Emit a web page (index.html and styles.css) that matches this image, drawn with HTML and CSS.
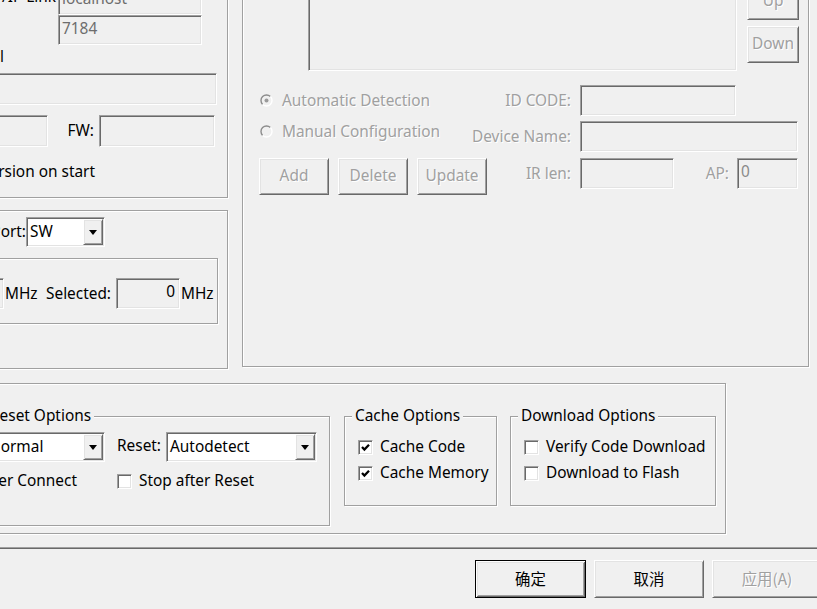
FILE: index.html
```html
<!DOCTYPE html>
<html>
<head>
<meta charset="utf-8">
<link rel="stylesheet" href="styles.css">
</head>
<body>
<div class="dialog">
  <div class="page">
    <div class="top">
      <div class="leftcol">
        <div class="group g1">
          <div class="row r-link">
            <div class="lbl l-link"><span>TCP/IP Link</span></div>
            <div class="edit e-host">localhost</div>
          </div>
          <div class="edit e-port">7184</div>
          <div class="lbl l-serial"><span>Serial</span></div>
          <div class="edit e-wide"></div>
          <div class="row r-fw">
            <div class="edit e-hw"></div>
            <div class="lbl l-fw"><span>FW:</span></div>
            <div class="edit e-fw"></div>
          </div>
          <div class="lbl l-ver"><span class="chkitem"><span class="chk"></span><span class="chk-text">Check version on start</span></span></div>
        </div>
        <div class="group g2">
          <div class="row r-port">
            <div class="lbl l-port"><span>Port:</span></div>
            <div class="combo c-port"><div class="combo-text">SW</div><div class="drop"><div class="tri"></div></div></div>
          </div>
          <div class="group g-clock">
            <div class="row r-clk">
              <div class="edit e-clk"></div>
              <div class="l-mhz1">MHz</div>
              <div class="lbl l-sel"><span>Selected:</span></div>
              <div class="edit e-sel">0</div>
              <div class="l-mhz2">MHz</div>
            </div>
          </div>
        </div>
      </div>
      <div class="group gright">
        <div class="row r-list">
          <div class="listbox"></div>
          <div class="updown">
            <div class="btn dis b-ud">Up</div>
            <div class="btn dis b-ud b-down">Down</div>
          </div>
        </div>
        <div class="row r-mid">
          <div class="radios">
            <div class="radio-item dis">
              <svg class="rb" width="13" height="13" viewBox="0 0 13 13"><circle cx="6.5" cy="6.5" r="5" fill="#f0f0f0"/><path d="M2.6 10.4A5.5 5.5 0 0 1 10.4 2.6" fill="none" stroke="#8c8c8c" stroke-width="1.4"/><path d="M10.4 2.6A5.5 5.5 0 0 1 2.6 10.4" fill="none" stroke="#ffffff" stroke-width="1.4"/><circle cx="6.5" cy="6.5" r="2" fill="#9a9a9a"/></svg>
              <span>Automatic Detection</span>
            </div>
            <div class="radio-item dis">
              <svg class="rb" width="13" height="13" viewBox="0 0 13 13"><circle cx="6.5" cy="6.5" r="5" fill="#f0f0f0"/><path d="M2.6 10.4A5.5 5.5 0 0 1 10.4 2.6" fill="none" stroke="#8c8c8c" stroke-width="1.4"/><path d="M10.4 2.6A5.5 5.5 0 0 1 2.6 10.4" fill="none" stroke="#ffffff" stroke-width="1.4"/></svg>
              <span>Manual Configuration</span>
            </div>
          </div>
          <div class="fields">
            <div class="row frow">
              <div class="lbl dis l-id"><span>ID CODE:</span></div>
              <div class="edit e-id"></div>
            </div>
            <div class="row frow f2">
              <div class="lbl dis l-id"><span>Device Name:</span></div>
              <div class="edit e-dev"></div>
            </div>
          </div>
        </div>
        <div class="row r-btns">
          <div class="btn dis b-act b-first">Add</div>
          <div class="btn dis b-act">Delete</div>
          <div class="btn dis b-act">Update</div>
          <div class="lbl dis l-ir"><span>IR len:</span></div>
          <div class="edit e-ir"></div>
          <div class="lbl dis l-ap"><span>AP:</span></div>
          <div class="edit e-ap">0</div>
        </div>
      </div>
    </div>
    <div class="group gbottom">
      <div class="row subs">
        <div class="group g-reset">
          <div class="title">Reset Options</div>
          <div class="row rs-row1">
            <div class="combo c-connect"><div class="combo-text">Normal</div><div class="drop"><div class="tri"></div></div></div>
            <div class="lbl l-reset"><span>Reset:</span></div>
            <div class="combo c-reset"><div class="combo-text">Autodetect</div><div class="drop"><div class="tri"></div></div></div>
          </div>
          <div class="row rs-row2">
            <div class="lbl l-stopc"><span class="chkitem"><span class="chk"></span><span class="chk-text">Stop after Connect</span></span></div>
            <div class="chkitem ci-reset"><span class="chk"></span><span class="chk-text">Stop after Reset</span></div>
          </div>
        </div>
        <div class="group g-cache">
          <div class="title">Cache Options</div>
          <div class="chkitem ck-row ck-first"><span class="chk"><svg class="tick" width="13" height="13" viewBox="0 0 13 13"><path d="M3 6 L5.4 8.5 L10 3.8" fill="none" stroke="#000" stroke-width="2.3"/></svg></span><span class="chk-text">Cache Code</span></div>
          <div class="chkitem ck-row ck-second"><span class="chk"><svg class="tick" width="13" height="13" viewBox="0 0 13 13"><path d="M3 6 L5.4 8.5 L10 3.8" fill="none" stroke="#000" stroke-width="2.3"/></svg></span><span class="chk-text">Cache Memory</span></div>
        </div>
        <div class="group g-down">
          <div class="title">Download Options</div>
          <div class="chkitem ck-row ck-first ck-clip"><span class="chk"></span><span class="chk-text">Verify Code Download</span></div>
          <div class="chkitem ck-row ck-second"><span class="chk"></span><span class="chk-text">Download to Flash</span></div>
        </div>
      </div>
    </div>
  </div>
  <div class="tabline"></div>
  <div class="buttons">
    <div class="btn btn-default bb bb-ok">确定</div>
    <div class="btn bb">取消</div>
    <div class="btn bb dis">应用(A)</div>
  </div>
</div>
</body>
</html>
```
FILE: styles.css
```css
* { box-sizing: border-box; }
html, body { margin: 0; padding: 0; background: #f0f0f0; }
body {
  font-family: "Noto Sans", "Liberation Sans", sans-serif;
  font-size: 15.4px;
  line-height: 18px;
  color: #000;
}
.dialog { width: 817px; height: 609px; overflow: hidden; background: #f0f0f0; }
.page { margin-left: -40px; }
.row { display: flex; align-items: flex-start; }

/* generic controls */
.group {
  border: 1px solid #a0a0a0;
  box-shadow: inset 1px 1px 0 #fff, 1px 1px 0 #fff;
}
.title {
  width: max-content;
  margin: -10px 0 0 7px;
  padding: 0 3px;
  background: #f0f0f0;
  line-height: 18px;
  white-space: nowrap;
}
.edit {
  flex: none;
  border: 1px solid;
  border-color: #a0a0a0 #fff #fff #a0a0a0;
  box-shadow: inset 1px 1px 0 #696969, inset -1px -1px 0 #e3e3e3;
  background: #f0f0f0;
  padding: 4px 3px 0;
  white-space: nowrap;
  overflow: hidden;
  color: #6d6d6d;
}
.combo {
  flex: none;
  display: flex;
  height: 30px;
  border: 1px solid;
  border-color: #a0a0a0 #fff #fff #a0a0a0;
  box-shadow: inset 1px 1px 0 #696969, inset -1px -1px 0 #e3e3e3;
  background: #fff;
  padding: 1px;
}
.combo-text { flex: 1; line-height: 26px; padding-left: 2px; white-space: nowrap; overflow: hidden; }
.drop {
  width: 20px;
  border: 1px solid;
  border-color: #fff #696969 #696969 #fff;
  box-shadow: inset 1px 1px 0 #e3e3e3, inset -1px -1px 0 #a0a0a0;
  background: #f0f0f0;
  display: flex;
  align-items: center;
  justify-content: center;
}
.tri { width: 0; height: 0; border-left: 4px solid transparent; border-right: 4px solid transparent; border-top: 5px solid #000; }
.btn {
  flex: none;
  border: 1px solid;
  border-color: #fff #696969 #696969 #fff;
  box-shadow: inset 1px 1px 0 #e3e3e3, inset -1px -1px 0 #a0a0a0;
  background: #f0f0f0;
  display: flex;
  align-items: center;
  justify-content: center;
  white-space: nowrap;
  padding-bottom: 2px;
}
.btn-default {
  border-color: #000;
  box-shadow: inset 1px 1px 0 #fff, inset -1px -1px 0 #696969, inset 2px 2px 0 #e3e3e3, inset -2px -2px 0 #a0a0a0;
}
.dis { color: #a0a0a0; text-shadow: 1px 1px 0 #fff; }
.lbl { flex: none; display: flex; justify-content: flex-end; white-space: nowrap; }
.chk {
  flex: none;
  display: block;
  width: 15px;
  height: 15px;
  border: 1px solid;
  border-color: #a0a0a0 #fff #fff #a0a0a0;
  box-shadow: inset 1px 1px 0 #696969, inset -1px -1px 0 #e3e3e3;
  background: #fff;
  margin-top: 2px;
}
.tick { display: block; }
.chkitem { display: flex; align-items: flex-start; white-space: nowrap; line-height: 18px; }
.chk-text { margin-left: 7px; }

/* layout */
.top { display: flex; align-items: flex-start; margin-top: -60px; height: 429px; }
.leftcol { width: 268px; flex: none; }

.g1 { height: 258px; }
.r-link { margin-top: 44px; height: 30px; }
.l-link { width: 95px; line-height: 24px; }
.e-host { margin-left: 2px; width: 144px; height: 30px; }
.e-port { margin-left: 97px; width: 144px; height: 30px; }
.l-serial { width: 43px; margin-top: 3px; }
.e-wide { margin-top: 7px; width: 256px; height: 32px; }
.r-fw { margin-top: 10px; height: 32px; }
.e-hw { width: 87px; height: 32px; }
.l-fw { width: 46px; line-height: 32px; }
.e-fw { margin-left: 5px; width: 116px; height: 32px; }
.l-ver { width: 134px; margin-top: 16px; }

.g2 { margin-top: 12px; height: 159px; }
.r-port { margin-top: 6px; height: 30px; }
.l-port { width: 65px; line-height: 30px; }
.c-port { width: 79px; }
.g-clock { margin: 11px 0 0 11px; width: 246px; height: 66px; }
.r-clk { margin-top: 19px; height: 31px; }
.e-clk { width: 31px; height: 31px; }
.l-mhz1 { width: 38px; padding-left: 1px; line-height: 31px; }
.l-sel { width: 69px; line-height: 31px; }
.e-sel { margin-left: 5px; width: 64px; height: 31px; text-align: right; padding-right: 4px; color: #000; }
.l-mhz2 { margin-left: 1px; line-height: 31px; }

.gright { margin-left: 14px; width: 567px; height: 427px; flex: none; }
.r-list { margin-top: 19px; }
.listbox {
  margin-left: 65px;
  width: 429px;
  height: 111px;
  border: 1px solid;
  border-color: #a0a0a0 #fff #fff #a0a0a0;
  box-shadow: inset 1px 1px 0 #696969, inset -1px -1px 0 #e3e3e3;
  background: #f0f0f0;
}
.updown { margin: 23px 0 0 10px; width: 52px; }
.b-ud { height: 37px; }
.b-down { margin-top: 6px; }
.r-mid { margin-top: 14px; }
.radios { margin-left: 16px; width: 214px; flex: none; }
.radio-item { display: flex; align-items: center; height: 31px; white-space: nowrap; }
.rb { flex: none; margin: 0 9px 0 1px; }
.frow { height: 31px; }
.f2 { margin-top: 5px; }
.l-id { width: 98px; line-height: 31px; }
.e-id { margin-left: 9px; width: 156px; height: 31px; }
.e-dev { margin-left: 9px; width: 218px; height: 31px; }
.r-btns { margin-top: 6px; }
.b-act { width: 70px; height: 37px; margin-left: 9px; }
.b-first { margin-left: 16px; }
.l-ir { width: 84px; line-height: 31px; }
.e-ir { margin-left: 9px; width: 94px; height: 31px; }
.l-ap { width: 55px; line-height: 31px; }
.e-ap { margin-left: 8px; width: 61px; height: 31px; color: #8a8a8a; }

.gbottom { margin-top: 14px; width: 766px; height: 151px; }
.subs { margin-top: 32px; }
.g-reset { margin-left: 18px; width: 351px; height: 110px; flex: none; }
.rs-row1 { margin-top: 7px; height: 30px; }
.c-connect { margin-left: 5px; width: 120px; }
.l-reset { width: 56px; line-height: 28px; }
.c-reset { margin-left: 5px; width: 151px; }
.rs-row2 { margin-top: 10px; height: 18px; }
.l-stopc { width: 97px; }
.ci-reset { margin-left: 40px; }
.g-cache { margin-left: 14px; width: 153px; height: 90px; flex: none; }
.g-down { margin-left: 13px; width: 206px; height: 90px; flex: none; }
.ck-row { margin-left: 13px; height: 18px; }
.ck-first { margin-top: 13px; }
.ck-second { margin-top: 8px; }
.ck-clip { width: 183px; overflow: hidden; }

.tabline { margin-top: 13px; height: 2px; border-top: 1px solid #a0a0a0; border-bottom: 1px solid #696969; }
.buttons { display: flex; margin-top: 11px; padding-left: 475px; }
.bb { width: 110px; height: 38px; margin-left: 8px; font-family: "Noto Sans CJK SC", "Noto Sans", sans-serif; }
.bb-ok { width: 111px; margin-left: 0; }
```
